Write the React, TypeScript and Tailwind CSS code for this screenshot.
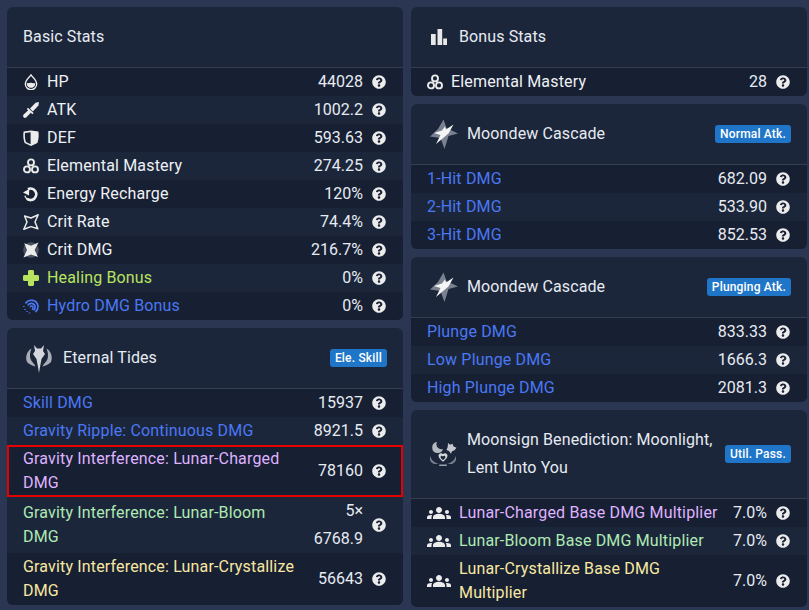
import React from 'react';
import { FaQuestionCircle } from 'react-icons/fa';
import { MdGroups } from 'react-icons/md';

const Drop = () => (
    <svg viewBox="0 0 16 16" className="w-4 h-4" fill="none">
        <path d="M8 .8C6.600 3.200 2.300 6 2.300 10a5.700 5.700 0 0 0 11.400 0C13.700 6 9.400 3.200 8 .8Z" stroke="#ececec" strokeWidth="1.300" />
        <path d="M3.800 8.800c1.500 1 2.800-.4 4.200 0 1.600.5 2.900.8 4.200 0 .4 3-1.500 5-4.200 5s-4.600-2-4.200-5Z" fill="#ececec" />
    </svg>
);

const Sword = () => (
    <svg viewBox="0 0 16 16" className="w-4 h-4" fill="#ececec">
        <path d="M16 0 15.400 3.400 9.800 9.400 7 6.600 12.600.8Z" />
        <path d="M5 5.800 10.600 11 9.400 12.200 7.800 10.800 3.200 15.600 1.400 16 0 14.500.4 12.800 5.200 8.200 3.800 7Z" />
    </svg>
);

const Shield = () => (
    <svg viewBox="0 0 16 16" className="w-4 h-4">
        <path d="M8 .4 15.400 1.600C16 5 15.800 9.400 14.400 13L8 16 1.600 13C.2 9.400 0 5 .6 1.600ZM7.600 2.200 2 3C1.700 6 2 9.500 3 12L7.600 14.200Z" fill="#ececec" fillRule="evenodd" />
    </svg>
);

const Mastery = () => (
    <svg viewBox="0 0 16 16" className="w-4 h-4" fill="none" stroke="#ececec" strokeWidth="1.900">
        <circle cx="8" cy="4.400" r="3" />
        <circle cx="4" cy="11.400" r="3" />
        <circle cx="12" cy="11.400" r="3" />
    </svg>
);

const Recharge = () => (
    <svg viewBox="0 0 16 16" className="w-4 h-4" fill="none">
        <path d="M5 3.200A5.700 5.700 0 1 1 4 12.800" stroke="#ececec" strokeWidth="2.700" />
        <path d="M0 6.400 6.200 3 6 9.500Z" fill="#ececec" />
        <path d="M1.800 9.800C2.800 12.500 5 14.300 8 14.800" stroke="#ececec" strokeWidth="1.200" />
    </svg>
);

const CritRate = () => (
    <svg viewBox="0 0 16 16" className="w-4 h-4" fill="none">
        <path d="M15.200.8 12 8l2.800 6.800L8 12.600.8 15.200 4 8 1.600 2 8 4Z" stroke="#ececec" strokeWidth="1.500" strokeLinejoin="round" />
    </svg>
);

const CritDmg = () => (
    <svg viewBox="0 0 16 16" className="w-4 h-4">
        <circle cx="8" cy="8" r="7.800" fill="#4b5262" />
        <path d="M15.500.5 11.600 8l3.400 7L8 12.400.5 15.500 4 8 1.200 1.200 8 3.800Z" fill="#ececec" />
    </svg>
);

const Heal = () => (
    <svg viewBox="0 0 16 16" className="w-4 h-4">
        <path d="M5 1.500C5 .6 5.600 0 6.500 0h3c.9 0 1.500.6 1.500 1.500V5h3.500c.9 0 1.500.6 1.500 1.500v3c0 .9-.6 1.500-1.500 1.500H11v3.500c0 .9-.6 1.500-1.500 1.500h-3C5.600 16 5 15.400 5 14.500V11H1.500C.6 11 0 10.400 0 9.500v-3C0 5.600.6 5 1.500 5H5Z" fill="#b8e35f" />
    </svg>
);

const Hydro = () => (
    <svg viewBox="0 0 16 16" className="w-4 h-4" fill="none" stroke="#4a78f5">
        <path d="M2.500 5.500A6.800 6.800 0 0 1 15 8a7 7 0 0 1-2.500 6" strokeWidth="1.700" />
        <path d="M4.800 7.500A3.800 3.800 0 0 1 12 8.500a4 4 0 0 1-1.500 3.800" strokeWidth="1.700" />
        <path d="M7.200 9.500a1.400 1.400 0 0 1 2.800 0c0 1.200-.5 1.800-1 2.300" strokeWidth="1.500" />
        <path d="M.8 8v1M2 11v1M4 13v1M6.500 14.500v1" strokeWidth="1.500" />
    </svg>
);

const Bars = () => (
    <svg viewBox="0 0 16 16" className="w-4 h-4" fill="#e8e8e8">
        <rect x="0" y="5" width="4.700" height="11.600" />
        <rect x="6.500" y="0" width="4.700" height="16.600" />
        <rect x="12.200" y="9.500" width="3.800" height="7" />
    </svg>
);

const Moondew = () => (
    <svg viewBox="0 0 32 32" className="w-8 h-8">
        <path d="M16.500 1.500 19.500 10 31 15.500 21.500 18 17.500 31 13.500 20 3 18.500 11 11Z" fill="#7a8190" />
        <path d="M26.500 6.500 21.500 15.500 9 26 13.500 17 7 15 15 12.500 18 8.500 19 11.500Z" fill="#f5f5f5" />
    </svg>
);

const Tides = () => (
    <svg viewBox="0 0 32 32" className="w-8 h-8">
        <path d="M11 3l3 3.500h4L21 3l-1 6 2 3-3.500 5-1.500 8L16 31l-1-6-1.500-8L10 12l2-3Z" fill="#d4d7dc" />
        <path d="M8.500 6.500C4 9 2 15 4 20c2 2.500 5 3.500 8.500 4.500-1-3-4-4.500-5-7.500-1-3.500-.5-7 1-10.500Z" fill="#a9aeb6" />
        <path d="M23.500 6.500C28 9 30 15 28 20c-2 2.500-5 3.500-8.500 4.500 1-3 4-4.500 5-7.500 1-3.500.5-7-1-10.500Z" fill="#a9aeb6" />
    </svg>
);

const Moonsign = () => (
    <svg viewBox="0 0 32 32" className="w-8 h-8">
        <path d="M10 4a5.500 5.500 0 1 0 6 7 5 5 0 0 1-6-7Z" fill="#b4b8bf" />
        <path d="M21 5l2 1.800 2.500-1 1 2.700 3 1.200-2 2.500-2.500 1-1 2.500-2-2.800-2.500-1 1.200-3Z" fill="#c5c8ce" />
        <path d="M16 16c1.800-1.600 4.500-.8 4.500 1.800 0 2.400-2.800 4.400-4.500 6-1.700-1.600-4.500-3.600-4.500-6 0-2.600 2.700-3.400 4.500-1.800ZM16 18.400c-1-1-2.400-.6-2.400.8 0 1 1.400 2 2.400 2.800 1-.8 2.400-1.800 2.400-2.800 0-1.400-1.400-1.800-2.400-.8Z" fill="#d4d7dc" fillRule="evenodd" />
        <path d="M3.500 18c.5 4 3.500 6.500 8.500 8H7C3.500 24.500 2 21.500 3.500 18ZM28.500 18c-.5 4-3.500 6.500-8.500 8h5c3.500-1.500 5-4.500 3.500-8Z" fill="#7a8190" />
        <rect x="12" y="26.500" width="8" height="1.500" rx=".7" fill="#9a9fa8" />
    </svg>
);

const Help = () => <FaQuestionCircle className="w-[14px] h-[14px] shrink-0 text-[#ececec]" />;

const Groups = () => <MdGroups className="w-6 h-6 text-[#ececec]" />;

const Card = ({ children }: { children: React.ReactNode }) => (
    <div className="bg-[#1c263a] rounded-md overflow-hidden shrink-0">{children}</div>
);

const Head = ({ icon, title, tag }: { icon?: React.ReactNode; title: React.ReactNode; tag?: string }) => (
    <div className="flex items-center gap-2 px-4 py-4 border-b border-[#343e52] leading-7 text-[#e6ebf2]">
        {icon && <span className="-my-1 flex shrink-0">{icon}</span>}
        <div className="flex-1 tracking-[0.007em]">{title}</div>
        {tag && <span className="bg-[#1f76c8] text-white text-xs leading-[18px] px-[5px] rounded-[3px] font-medium tracking-[0.015em]">{tag}</span>}
    </div>
);

const Row = ({ icon, label, value, color, idx, tall }: { icon?: React.ReactNode; label: React.ReactNode; value: React.ReactNode; color?: string; idx: number; tall?: boolean }) => (
    <div className={`flex items-center pl-4 pr-[17px] ${tall ? '' : 'py-[2px]'} ${idx % 2 === 0 ? 'bg-[#171f32]' : ''}`}>
        {icon && <span className="mr-2 shrink-0 flex">{icon}</span>}
        <div className={`flex-1 leading-6 tracking-[0.01em] ${color || 'text-[#eef1f5]'}`}>{label}</div>
        <div className="ml-3 text-right leading-6 text-[#e6ebf2] shrink-0">{value}</div>
        <span className="ml-[9px] flex"><Help /></span>
    </div>
);

const BLUE = 'text-[#4a78f5]';

const basic: [React.ReactNode, string, string, string?][] = [
    [<Drop />, 'HP', '44028'],
    [<Sword />, 'ATK', '1002.2'],
    [<Shield />, 'DEF', '593.63'],
    [<Mastery />, 'Elemental Mastery', '274.25'],
    [<Recharge />, 'Energy Recharge', '120%'],
    [<CritRate />, 'Crit Rate', '74.4%'],
    [<CritDmg />, 'Crit DMG', '216.7%'],
    [<Heal />, 'Healing Bonus', '0%', 'text-[#b8e35f]'],
    [<Hydro />, 'Hydro DMG Bonus', '0%', BLUE],
];

const normal = [['1-Hit DMG', '682.09'], ['2-Hit DMG', '533.90'], ['3-Hit DMG', '852.53']];
const plunge = [['Plunge DMG', '833.33'], ['Low Plunge DMG', '1666.3'], ['High Plunge DMG', '2081.3']];

const App = () => {
    return (
        <div className="bg-[#2b3752] h-[610px] overflow-hidden pt-[7px] pl-[7px] flex gap-2 text-base font-[Roboto,sans-serif]">
            <div className="w-[396px] flex flex-col gap-2 shrink-0">
                <Card>
                    <Head title="Basic Stats" />
                    {basic.map((b, i) => (
                        <Row key={i} idx={i} icon={b[0]} label={b[1]} value={b[2]} color={b[3]} />
                    ))}
                </Card>
                <Card>
                    <Head icon={<Tides />} title="Eternal Tides" tag="Ele. Skill" />
                    <Row idx={0} label="Skill DMG" value="15937" color={BLUE} />
                    <Row idx={1} label="Gravity Ripple: Continuous DMG" value="8921.5" color={BLUE} />
                    <div className="outline-2 -outline-offset-2 outline-[#e60000] relative">
                        <Row idx={2} label="Gravity Interference: Lunar-Charged DMG" value="78160" color="text-[#dfb3ff]" />
                    </div>
                    <Row
                        idx={3}
                        tall
                        label={<>Gravity Interference: Lunar-Bloom<br />DMG</>}
                        value={<><div className="leading-7">5×</div><div className="leading-7">6768.9</div></>}
                        color="text-[#aeeab4]"
                    />
                    <Row idx={4} label="Gravity Interference: Lunar-Crystallize DMG" value="56643" color="text-[#f8e8a2]" />
                </Card>
            </div>
            <div className="w-[396px] flex flex-col gap-2 shrink-0">
                <Card>
                    <Head icon={<span className="w-6 flex justify-center"><Bars /></span>} title="Bonus Stats" />
                    <Row idx={0} icon={<Mastery />} label="Elemental Mastery" value="28" />
                </Card>
                <Card>
                    <Head icon={<Moondew />} title="Moondew Cascade" tag="Normal Atk." />
                    {normal.map((r, i) => <Row key={i} idx={i} label={r[0]} value={r[1]} color={BLUE} />)}
                </Card>
                <Card>
                    <Head icon={<Moondew />} title="Moondew Cascade" tag="Plunging Atk." />
                    {plunge.map((r, i) => <Row key={i} idx={i} label={r[0]} value={r[1]} color={BLUE} />)}
                </Card>
                <Card>
                    <Head icon={<Moonsign />} title="Moonsign Benediction: Moonlight, Lent Unto You" tag="Util. Pass." />
                    <Row idx={0} icon={<Groups />} label="Lunar-Charged Base DMG Multiplier" value="7.0%" color="text-[#dfb3ff]" />
                    <Row idx={1} icon={<Groups />} label="Lunar-Bloom Base DMG Multiplier" value="7.0%" color="text-[#aeeab4]" />
                    <Row idx={2} icon={<Groups />} label="Lunar-Crystallize Base DMG Multiplier" value="7.0%" color="text-[#f8e8a2]" />
                </Card>
            </div>
        </div>
    );
};

export default App;
